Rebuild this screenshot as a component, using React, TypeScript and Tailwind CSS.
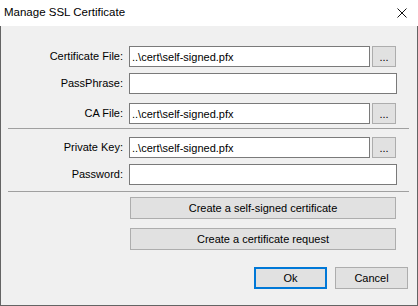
import React from "react";

const font = { fontFamily: '"Liberation Sans", Arial, sans-serif' };

function Label({ children }: { children: React.ReactNode }) {
  return (
    <div className="w-[122px] shrink-0 text-right text-[11px] text-black pr-[0px]">{children}</div>
  );
}

function Field({ value, wide }: { value?: string; wide?: boolean }) {
  return (
    <input
      readOnly
      value={value ?? ""}
      className={
        (wide ? "w-[268px]" : "w-[241px]") +
        " h-[21px] border border-[#7a7a7a] bg-white px-[2px] text-[11px] text-black outline-none"
      }
    />
  );
}

function Browse() {
  return (
    <div className="ml-[2px] flex h-[21px] w-[24px] items-center justify-center border border-[#adadad] bg-[#e1e1e1] text-[11px] text-black leading-none pt-[2px]">
      ...
    </div>
  );
}

function Row({ label, value, browse, mt }: { label: string; value?: string; browse?: boolean; mt: string }) {
  return (
    <div className={"flex items-center " + mt}>
      <Label>{label}</Label>
      <div className="ml-[6px] flex items-center">
        <Field value={value} wide={!browse} />
        {browse && <Browse />}
      </div>
    </div>
  );
}

export default function App() {
  return (
    <div className="w-[418px] h-[306px] overflow-hidden bg-white" style={font}>
      <div className="flex h-[26px] items-center justify-between bg-white pl-[4px] pr-[11px]">
        <span className="text-[11.5px] text-black">Manage SSL Certificate</span>
        <svg width="10" height="10" viewBox="0 0 10 10" className="block">
          <path d="M0.5 0.5 L9.5 9.5 M9.5 0.5 L0.5 9.5" stroke="#111" strokeWidth="1" />
        </svg>
      </div>
      <div className="flex h-[280px] flex-col border-x border-b border-[#646464] bg-[#f0f0f0]">
        <Row label="Certificate File:" value="..\cert\self-signed.pfx" browse mt="mt-[20px]" />
        <Row label="PassPhrase:" mt="mt-[6px]" />
        <Row label="CA File:" value="..\cert\self-signed.pfx" browse mt="mt-[9px]" />
        <div className="ml-[7px] mt-[4px] h-px w-[401px] bg-[#a0a0a0]" />
        <Row label="Private Key:" value="..\cert\self-signed.pfx" browse mt="mt-[8px]" />
        <Row label="Password:" mt="mt-[6px]" />
        <div className="ml-[7px] mt-[6px] h-px w-[401px] bg-[#a0a0a0]" />
        <div className="ml-[129px] mt-[5px] flex h-[22px] w-[266px] items-center justify-center border border-[#adadad] bg-[#e1e1e1] text-[11px] text-black">
          Create a self-signed certificate
        </div>
        <div className="ml-[129px] mt-[9px] flex h-[22px] w-[266px] items-center justify-center border border-[#adadad] bg-[#e1e1e1] text-[11px] text-black">
          Create a certificate request
        </div>
        <div className="mt-[17px] flex justify-end gap-[8px] pr-[9px]">
          <div className="flex h-[22px] w-[73px] items-center justify-center border-2 border-[#0078d7] bg-[#e1e1e1] text-[11px] text-black">
            Ok
          </div>
          <div className="flex h-[22px] w-[73px] items-center justify-center border border-[#adadad] bg-[#e1e1e1] text-[11px] text-black">
            Cancel
          </div>
        </div>
      </div>
    </div>
  );
}
